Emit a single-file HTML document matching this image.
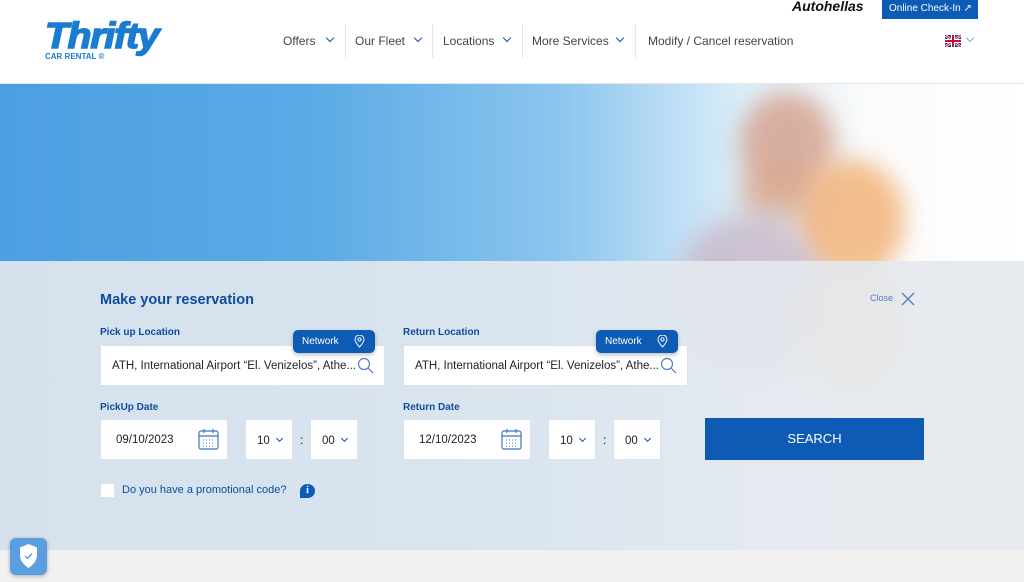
<!DOCTYPE html>
<html><head><meta charset="utf-8"><style>
*{margin:0;padding:0;box-sizing:border-box}
body{width:1024px;height:582px;overflow:hidden;font-family:"Liberation Sans",sans-serif;background:#f1f1f1;position:relative}
.hdr{position:absolute;left:0;top:0;width:1024px;height:84px;background:#fff;border-bottom:1px solid #e4e4e4;z-index:5}
.hero{position:absolute;left:0;top:84px;width:1024px;height:466px;overflow:hidden;background:linear-gradient(90deg,#4c9fe1 0%,#5aaae6 30%,#8cc6ee 55%,#d9ecf8 72%,#fbfbfb 85%,#fff 100%)}
.blob{position:absolute;border-radius:50%;filter:blur(12px)}
.form{position:absolute;left:0;top:261px;width:1024px;height:289px;background:rgba(228,233,238,.9)}
.nav{position:absolute;top:34px;font-size:12px;color:#444}
.sep{position:absolute;top:24px;width:1px;height:34px;background:#e6e6e6}
.chev{display:inline-block;width:6px;height:6px;border-right:1.5px solid #1a4fa0;border-bottom:1.5px solid #1a4fa0;transform:rotate(45deg);position:absolute}
.lbl{position:absolute;font-size:10px;font-weight:bold;color:#0d4d9c}
.box{position:absolute;background:#fff;border:1px solid #dde2e8;font-size:11.5px;color:#222}
.net{position:absolute;background:#0d5bb4;color:#fff;font-size:10px;border-radius:5px;width:82px;height:23px;padding:6px 0 0 9px;box-shadow:0 2px 4px rgba(0,0,0,.25)}
</style></head><body>
<div class="hdr">
 <div style="position:absolute;left:45px;top:15px;font:italic 900 36px 'Liberation Sans',sans-serif;color:#1a7cd0;letter-spacing:-1px;transform:scaleX(1.08);transform-origin:left;-webkit-text-stroke:1.5px #1a7cd0">Thrifty</div>
 <div style="position:absolute;left:45px;top:52px;font:bold 8px 'Liberation Sans',sans-serif;color:#1a7cd0">CAR RENTAL ®</div>
 <div class="nav" style="left:283px">Offers</div><span class="chev" style="left:327px;top:35px"></span>
 <div class="sep" style="left:345px"></div>
 <div class="nav" style="left:355px">Our Fleet</div><span class="chev" style="left:415px;top:35px"></span>
 <div class="sep" style="left:432px"></div>
 <div class="nav" style="left:443px">Locations</div><span class="chev" style="left:504px;top:35px"></span>
 <div class="sep" style="left:522px"></div>
 <div class="nav" style="left:532px">More Services</div><span class="chev" style="left:617px;top:35px"></span>
 <div class="sep" style="left:635px"></div>
 <div class="nav" style="left:648px">Modify / Cancel reservation</div>
 <svg style="position:absolute;left:945px;top:35px" width="16" height="12" viewBox="0 0 16 12"><rect width="16" height="12" fill="#1f3c8f"/><path d="M0 0L16 12M16 0L0 12" stroke="#fff" stroke-width="2.5"/><path d="M0 0L16 12M16 0L0 12" stroke="#c8102e" stroke-width="1"/><path d="M8 0V12M0 6H16" stroke="#fff" stroke-width="4"/><path d="M8 0V12M0 6H16" stroke="#c8102e" stroke-width="2"/></svg>
 <span class="chev" style="left:967px;top:35px;border-color:#8aa8d0"></span>
 <div style="position:absolute;left:792px;top:-2px;font:italic 900 14px 'Liberation Sans',sans-serif;color:#111">Autohellas</div>
 <div style="position:absolute;left:882px;top:0;width:96px;height:19px;background:#0d5bb4;color:#fff;font-size:10px;padding:3px 0 0 7px">Online Check-In ↗</div>
</div>
<div class="hero">
 <div class="blob" style="left:740px;top:8px;width:95px;height:105px;background:#d6a390;opacity:.85"></div>
 <div class="blob" style="left:795px;top:75px;width:110px;height:120px;background:#f2b37a;opacity:.85"></div>
 <div class="blob" style="left:740px;top:80px;width:70px;height:60px;background:#dba58a;opacity:.7"></div>
 <div class="blob" style="left:675px;top:130px;width:150px;height:160px;background:#c9b8c8;opacity:.8"></div>
 <div class="blob" style="left:800px;top:170px;width:110px;height:140px;background:#f1c590;opacity:.7"></div>
</div>
<div class="form">
 <div style="position:absolute;left:100px;top:31px;font-size:14.5px;font-weight:bold;color:#0d4d9c">Make your reservation</div>
 <div style="position:absolute;left:870px;top:32px;font-size:9px;color:#4f7fc0">Close</div>
 <svg style="position:absolute;left:901px;top:31px" width="14" height="14"><path d="M1 1L13 13M13 1L1 13" stroke="#4f7fc0" stroke-width="1.3"/></svg>
 <div class="lbl" style="left:100px;top:66px">Pick up Location</div>
 <div class="lbl" style="left:403px;top:66px">Return Location</div>
 <div class="box" style="left:100px;top:84px;width:285px;height:41px;padding:14px 0 0 11px">ATH, International Airport “El. Venizelos”, Athe...</div>
 <div class="box" style="left:403px;top:84px;width:285px;height:41px;padding:14px 0 0 11px">ATH, International Airport “El. Venizelos”, Athe...</div>
 <svg style="position:absolute;left:357px;top:96px" width="17" height="17"><circle cx="7" cy="7" r="5.5" fill="none" stroke="#4f7fc0" stroke-width="1.2"/><path d="M11 11L16 16" stroke="#4f7fc0" stroke-width="1.2"/></svg>
 <svg style="position:absolute;left:660px;top:96px" width="17" height="17"><circle cx="7" cy="7" r="5.5" fill="none" stroke="#4f7fc0" stroke-width="1.2"/><path d="M11 11L16 16" stroke="#4f7fc0" stroke-width="1.2"/></svg>
 <div class="net" style="left:293px;top:69px">Network<svg style="position:absolute;left:61px;top:5px" width="11" height="13"><path d="M5.5 12C2 8 1 6 1 4.5A4.5 4.5 0 0 1 10 4.5C10 6 9 8 5.5 12Z" fill="none" stroke="#fff"/><circle cx="5.5" cy="4.5" r="1.6" fill="none" stroke="#fff"/></svg></div>
 <div class="net" style="left:596px;top:69px">Network<svg style="position:absolute;left:61px;top:5px" width="11" height="13"><path d="M5.5 12C2 8 1 6 1 4.5A4.5 4.5 0 0 1 10 4.5C10 6 9 8 5.5 12Z" fill="none" stroke="#fff"/><circle cx="5.5" cy="4.5" r="1.6" fill="none" stroke="#fff"/></svg></div>
 <div class="lbl" style="left:100px;top:141px">PickUp Date</div>
 <div class="lbl" style="left:403px;top:141px">Return Date</div>
 <div class="box" style="left:100px;top:158px;width:128px;height:41px;padding:14px 0 0 15px">09/10/2023</div>
 <div class="box" style="left:403px;top:158px;width:128px;height:41px;padding:14px 0 0 15px">12/10/2023</div>
 <svg style="position:absolute;left:198px;top:167px" width="21" height="22"><rect x="1" y="3" width="19" height="18" rx="2" fill="none" stroke="#3a78c0" stroke-width="1.2"/><path d="M1 8H20M6 1V5M15 1V5" stroke="#3a78c0" stroke-width="1.2"/><path d="M5 12h11M5 15h11M5 18h11" stroke="#3a78c0" stroke-dasharray="1 2"/></svg>
 <svg style="position:absolute;left:501px;top:167px" width="21" height="22"><rect x="1" y="3" width="19" height="18" rx="2" fill="none" stroke="#3a78c0" stroke-width="1.2"/><path d="M1 8H20M6 1V5M15 1V5" stroke="#3a78c0" stroke-width="1.2"/><path d="M5 12h11M5 15h11M5 18h11" stroke="#3a78c0" stroke-dasharray="1 2"/></svg>
 <div class="box" style="left:245px;top:158px;width:48px;height:41px;padding:15px 0 0 11px">10</div><span class="chev" style="left:277px;top:175px;width:5px;height:5px"></span>
 <div style="position:absolute;left:300px;top:172px;font-size:12px;color:#222">:</div>
 <div class="box" style="left:310px;top:158px;width:48px;height:41px;padding:15px 0 0 11px">00</div><span class="chev" style="left:342px;top:175px;width:5px;height:5px"></span>
 <div class="box" style="left:548px;top:158px;width:48px;height:41px;padding:15px 0 0 11px">10</div><span class="chev" style="left:580px;top:175px;width:5px;height:5px"></span>
 <div style="position:absolute;left:603px;top:172px;font-size:12px;color:#222">:</div>
 <div class="box" style="left:613px;top:158px;width:48px;height:41px;padding:15px 0 0 11px">00</div><span class="chev" style="left:645px;top:175px;width:5px;height:5px"></span>
 <div style="position:absolute;left:705px;top:157px;width:219px;height:42px;background:#0d5bb4;color:#fff;font-size:13px;text-align:center;line-height:42px">SEARCH</div>
 <div style="position:absolute;left:100px;top:222px;width:15px;height:15px;background:#fff;border:1px solid #dde2e8"></div>
 <div style="position:absolute;left:122px;top:223px;font-size:11px;color:#0d4d9c">Do you have a promotional code?</div>
 <div style="position:absolute;left:300px;top:223px;width:15px;height:14px;border-radius:50% 50% 50% 0;background:#0d5bb4;color:#fff;font:bold 10px 'Liberation Serif',serif;text-align:center;line-height:14px">i</div>
</div>
<div style="position:absolute;left:10px;top:538px;width:37px;height:37px;border-radius:6px;background:#5a9de0;box-shadow:0 1px 4px rgba(0,0,0,.3)">
 <svg style="position:absolute;left:8px;top:5px" width="21" height="26"><path d="M10.5 1L19 4.5V12C19 18 15 22 10.5 25C6 22 2 18 2 12V4.5Z" fill="#fff"/><path d="M7 13L9.5 15.5L14 10.5" stroke="#5a9de0" stroke-width="1.4" fill="none"/></svg>
</div>
</body></html>
